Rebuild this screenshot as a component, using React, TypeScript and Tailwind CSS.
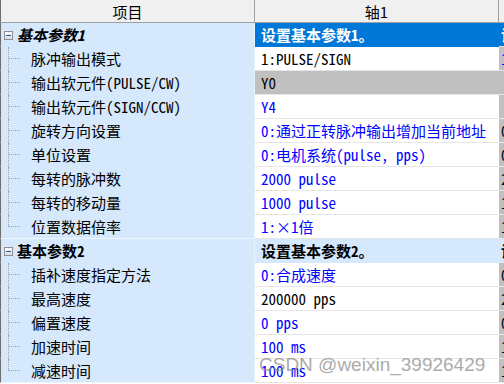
import React from "react";

type Row =
  | { kind: "group"; label: string; value: string; italic?: boolean; selected?: boolean; extra: string }
  | { kind: "item"; label: string; value: string; blue: boolean; gray?: boolean; last?: boolean; extra: string; extraBlue?: boolean };

const rows: Row[] = [
  { kind: "group", label: "基本参数1", value: "设置基本参数1。", italic: true, selected: true, extra: "设置" },
  { kind: "item", label: "脉冲输出模式", value: "1:PULSE/SIGN", blue: false, extra: "1", extraBlue: true },
  { kind: "item", label: "输出软元件(PULSE/CW)", value: "Y0", blue: false, gray: true, extra: "" },
  { kind: "item", label: "输出软元件(SIGN/CCW)", value: "Y4", blue: true, extra: "" },
  { kind: "item", label: "旋转方向设置", value: "0:通过正转脉冲输出增加当前地址", blue: true, extra: "0" },
  { kind: "item", label: "单位设置", value: "0:电机系统(pulse, pps)", blue: true, extra: "0" },
  { kind: "item", label: "每转的脉冲数", value: "2000 pulse", blue: true, extra: "2" },
  { kind: "item", label: "每转的移动量", value: "1000 pulse", blue: true, extra: "1" },
  { kind: "item", label: "位置数据倍率", value: "1:×1倍", blue: true, last: true, extra: "1" },
  { kind: "group", label: "基本参数2", value: "设置基本参数2。", extra: "设置" },
  { kind: "item", label: "插补速度指定方法", value: "0:合成速度", blue: true, extra: "0" },
  { kind: "item", label: "最高速度", value: "200000 pps", blue: false, extra: "2" },
  { kind: "item", label: "偏置速度", value: "0 pps", blue: true, extra: "0" },
  { kind: "item", label: "加速时间", value: "100 ms", blue: true, extra: "1" },
  { kind: "item", label: "减速时间", value: "100 ms", blue: true, last: true, extra: "1" },
];

const font = {
  fontFamily:
    '"Noto Sans Mono CJK SC", "Noto Sans CJK SC", "DejaVu Sans Mono", monospace',
};

function MinusBox() {
  return (
    <div className="absolute left-[3px] top-[8px] w-[9px] h-[9px] border border-[#8e8f8f] bg-gradient-to-b from-white to-[#dcdcdc] flex items-center justify-center">
      <div className="w-[5px] h-[1px] bg-[#2a4f8f]" />
    </div>
  );
}

export default function App() {
  return (
    <div className="relative w-[504px] h-[384px] overflow-hidden bg-white text-[15px] leading-none" style={font}>
      {/* header */}
      <div className="grid grid-cols-[255px_244px_5px] h-[23px] bg-[#f0f0f0] border-b border-[#a0a0a0]">
        <div className="flex items-center justify-center border-r border-[#a0a0a0] border-l border-l-[#6d6d6d]" style={{ fontFamily: '"Noto Sans CJK SC", sans-serif' }}>
          项目
        </div>
        <div className="flex items-center justify-center border-r border-[#a0a0a0]" style={{ fontFamily: '"Noto Sans CJK SC", sans-serif' }}>
          轴1
        </div>
        <div />
      </div>
      {rows.map((r, i) => {
        const isGroup = r.kind === "group";
        const leftBorder =
          r.kind === "item" && r.last ? "border-[#eef5fd]" : "border-[#d6e8fc]";
        let valueCls = "bg-white text-black border-[#e6e6e6]";
        if (r.kind === "group") {
          valueCls = r.selected
            ? "bg-[#0078d7] text-white font-bold border-[#0078d7]"
            : "bg-[#d6e8fc] text-black font-bold border-[#d6e8fc]";
        } else if (r.gray) {
          valueCls = "bg-[#c0c0c0] text-black border-[#e6e6e6]";
        } else if (r.blue) {
          valueCls = "bg-white text-[#0000ff] border-[#e6e6e6]";
        }
        const extraCls = isGroup
          ? r.kind === "group" && r.selected
            ? "bg-[#0078d7] text-white font-bold"
            : "bg-[#d6e8fc] text-black font-bold"
          : r.kind === "item" && r.extraBlue
          ? "bg-[#c0c0c0] text-[#0000ff]"
          : "bg-[#c0c0c0] text-black";
        return (
          <div key={i} className="grid grid-cols-[255px_244px_5px] h-[24px]">
            <div
              className={`relative flex items-center bg-[#d6e8fc] border-b border-l border-l-[#6d6d6d] border-r border-r-[#e9f1fb] ${leftBorder}`}
            >
              {isGroup ? (
                <>
                  <MinusBox />
                  <span className={`pl-[16px] pb-[1px] font-bold text-black ${r.kind === "group" && r.italic ? "italic" : ""}`}>
                    {r.label}
                  </span>
                </>
              ) : (
                <>
                  <div
                    className={`absolute left-[7px] top-0 w-0 border-l border-dotted border-[#a0a0a0] ${r.kind === "item" && r.last ? "h-[12px]" : "h-[24px]"}`}
                  />
                  <div className="absolute left-[8px] top-[11px] w-[11px] h-0 border-t border-dotted border-[#a0a0a0]" />
                  <span className="pl-[30px] pb-[1px] text-black">{r.label}</span>
                </>
              )}
            </div>
            <div className={`flex items-center border-b pl-[6px] whitespace-nowrap overflow-hidden ${valueCls}`}>
              <span className="pb-[1px]">{r.value}</span>
            </div>
            <div className={`flex items-center overflow-hidden whitespace-nowrap pl-[2px] border-b border-[#e6e6e6] ${extraCls}`}>
              <span className="pb-[1px]">{r.extra}</span>
            </div>
          </div>
        );
      })}
      <div
        className="absolute left-[259px] top-[355px] text-[19px] leading-none text-[#909090] opacity-75 pointer-events-none"
        style={{ fontFamily: '"Liberation Sans", Arial, sans-serif' }}
      >
        CSDN @weixin_39926429
      </div>
    </div>
  );
}
